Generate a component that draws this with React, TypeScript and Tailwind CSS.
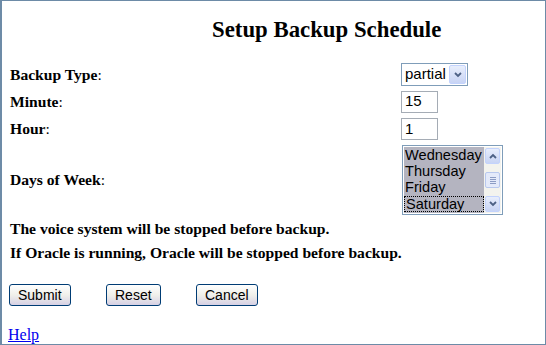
import React from "react";

const serif = { fontFamily: '"Liberation Serif", "Times New Roman", serif' };
const sans = { fontFamily: '"Liberation Sans", Arial, sans-serif' };

function Label({ text }: { text: string }) {
  return (
    <span className="text-[15.6px] text-black" style={serif}>
      <b>{text}</b>:
    </span>
  );
}

function XpButton({ children }: { children: React.ReactNode }) {
  return (
    <button
      type="button"
      className="flex h-[22px] items-center rounded-[3px] border border-[#003c74] bg-gradient-to-b from-white via-[#f0f0ea] to-[#d6d0e4] px-[8px] text-[14px] leading-none text-black"
      style={sans}
    >
      {children}
    </button>
  );
}

function ArrowBox({ up, big }: { up?: boolean; big?: boolean }) {
  return (
    <div
      className={`flex ${big ? "h-[19px] w-[17px]" : "h-[16px] w-[15px]"} items-center justify-center rounded-[2px] border border-[#c3d3fd] bg-gradient-to-b from-[#e8eefc] to-[#c8d4f4]`}
    >
      <svg width="8" height="6" viewBox="0 0 8 6">
        <path
          d={up ? "M1 5 L4 2 L7 5" : "M1 1 L4 4 L7 1"}
          fill="none"
          stroke="#4d6185"
          strokeWidth="1.8"
        />
      </svg>
    </div>
  );
}

export default function App() {
  const days = ["Wednesday", "Thursday", "Friday", "Saturday"];
  return (
    <div className="h-[345px] w-[546px] overflow-hidden border border-l-2 border-[#6d8ba7] bg-white">
      <h1
        className="pt-[16px] pl-[210px] text-[22.8px] font-bold leading-[26px] text-black"
        style={serif}
      >
        Setup Backup Schedule
      </h1>

      <div className="mt-[18px] grid grid-cols-[391px_1fr] pl-[8px]">
        <div className="flex h-[27px] items-center">
          <Label text="Backup Type" />
        </div>
        <div className="flex h-[27px] items-center">
          <div className="flex h-[23px] w-[67px] items-center border border-[#7f9db9] bg-white pl-[3px] pr-[1px]">
            <span className="flex-1 text-[15px] text-black" style={sans}>
              partial
            </span>
            <ArrowBox big />
          </div>
        </div>

        <div className="flex h-[27px] items-center">
          <Label text="Minute" />
        </div>
        <div className="flex h-[27px] items-center">
          <div
            className="flex h-[22px] w-[37px] items-center border border-[#a5acb5] bg-white pl-[3px] text-[15px] text-black"
            style={sans}
          >
            15
          </div>
        </div>

        <div className="flex h-[28px] items-center">
          <Label text="Hour" />
        </div>
        <div className="flex h-[28px] items-center">
          <div
            className="flex h-[22px] w-[37px] items-center border border-[#a5acb5] bg-white pl-[3px] text-[15px] text-black"
            style={sans}
          >
            1
          </div>
        </div>

        <div className="flex h-[74px] items-center">
          <Label text="Days of Week" />
        </div>
        <div className="flex h-[74px] items-center pl-[1px]">
          <div className="flex h-[70px] w-[101px] border border-[#7f9db9] bg-white p-[1px]">
            <div className="flex-1 overflow-hidden bg-[#b4b4c0] pt-[1px]">
              {days.map((d, i) => (
                <div
                  key={d}
                  className={`h-[16px] pl-[1px] text-[14.6px] leading-[15px] text-black ${
                    i === days.length - 1 ? "border border-dotted border-black pl-0" : ""
                  }`}
                  style={sans}
                >
                  {d}
                </div>
              ))}
            </div>
            <div className="flex w-[17px] flex-col items-center justify-between bg-[#f3f3ee] py-[1px]">
              <ArrowBox up />
              <div className="flex h-[16px] w-[15px] flex-col items-center justify-center gap-[1px] rounded-[2px] border border-[#b8c8ee] bg-[#e4eafa]">
                <div className="h-px w-[6px] bg-[#8c9cc4]" />
                <div className="h-px w-[6px] bg-[#8c9cc4]" />
                <div className="h-px w-[6px] bg-[#8c9cc4]" />
                <div className="h-px w-[6px] bg-[#8c9cc4]" />
              </div>
              <ArrowBox />
            </div>
          </div>
        </div>
      </div>

      <div className="pl-[8px] text-[15.6px] font-bold text-black" style={serif}>
        <p className="leading-[24px]">The voice system will be stopped before backup.</p>
        <p className="leading-[24px]">If Oracle is running, Oracle will be stopped before backup.</p>
      </div>

      <div className="mt-[19px] flex items-center pl-[7px]">
        <div className="flex w-[97px]">
          <XpButton>Submit</XpButton>
        </div>
        <div className="flex w-[90px]">
          <XpButton>Reset</XpButton>
        </div>
        <XpButton>Cancel</XpButton>
      </div>

      <div className="mt-[19px] pl-[6px] leading-[18px]">
        <a href="#" className="text-[16px] text-[#0000ee] underline" style={serif}>
          Help
        </a>
      </div>
    </div>
  );
}
